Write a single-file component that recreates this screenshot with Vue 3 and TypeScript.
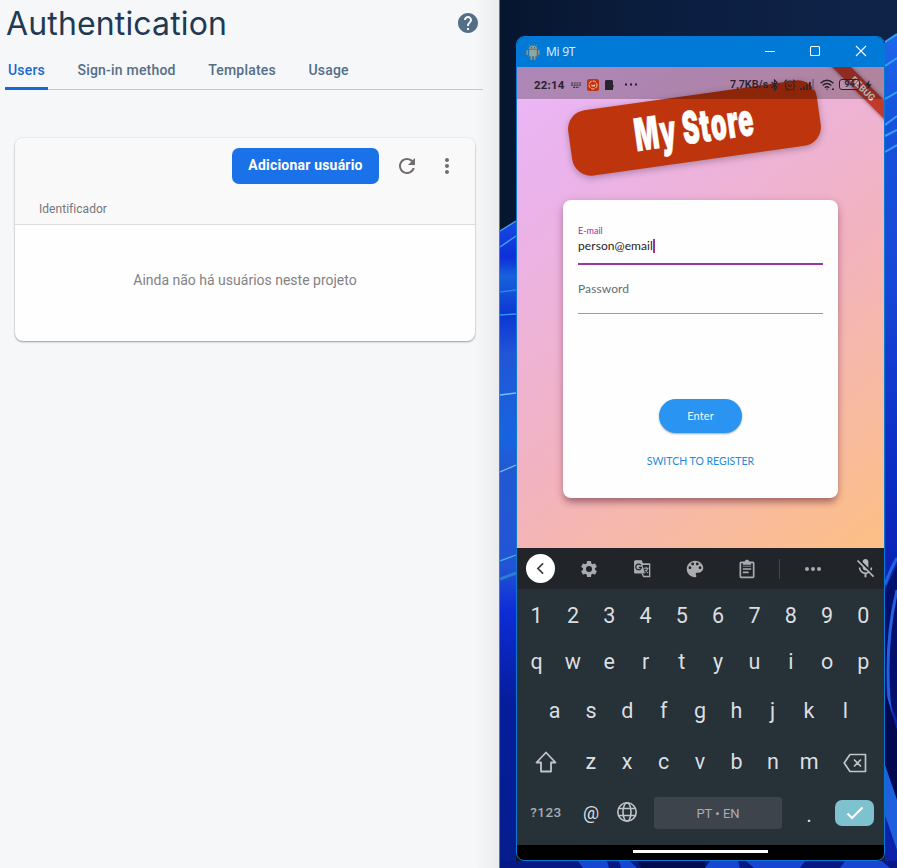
<script setup lang="ts">
interface Tab {
  label: string
  active?: boolean
}

const tabs: Tab[] = [
  { label: 'Users', active: true },
  { label: 'Sign-in method' },
  { label: 'Templates' },
  { label: 'Usage' },
]

const digits: string[] = [...'1234567890']
const topRow: string[] = [...'qwertyuiop']
const homeRow: string[] = [...'asdfghjkl']
const bottomRow: string[] = [...'zxcvbnm']
</script>

<template>
  <div class="page">
    <main class="console">
      <header class="heading">
        <h1>Authentication</h1>
        <svg class="help" viewBox="0 0 24 24"><path fill="#546e87" d="M12 2C6.48 2 2 6.48 2 12s4.48 10 10 10 10-4.48 10-10S17.52 2 12 2zm1 17h-2v-2h2v2zm2.07-7.75-.9.92C13.45 12.9 13 13.5 13 15h-2v-.5c0-1.1.45-2.1 1.17-2.83l1.24-1.26c.37-.36.59-.86.59-1.41 0-1.1-.9-2-2-2s-2 .9-2 2H8c0-2.21 1.79-4 4-4s4 1.79 4 4c0 .88-.36 1.68-.93 2.25z" /></svg>
      </header>
      <nav class="tabs">
        <a v-for="tab in tabs" :key="tab.label" :class="['tab', { active: tab.active }]">{{ tab.label }}</a>
      </nav>
      <section class="users">
        <div class="users-head">
          <div class="toolbar">
            <button class="add">Adicionar usuário</button>
            <svg class="tool refresh" viewBox="0 0 24 24"><path fill="#746b70" d="M17.65 6.35C16.2 4.9 14.21 4 12 4c-4.42 0-7.99 3.58-7.99 8s3.57 8 7.99 8c3.73 0 6.84-2.55 7.73-6h-2.08c-.82 2.33-3.04 4-5.65 4-3.31 0-6-2.69-6-6s2.69-6 6-6c1.66 0 3.14.69 4.22 1.78L13 11h7V4l-2.35 2.35z" /></svg>
            <svg class="tool" viewBox="0 0 24 24"><path fill="#746b70" d="M12 8c1.1 0 2-.9 2-2s-.9-2-2-2-2 .9-2 2 .9 2 2 2zm0 2c-1.1 0-2 .9-2 2s.9 2 2 2 2-.9 2-2-.9-2-2-2zm0 6c-1.1 0-2 .9-2 2s.9 2 2 2 2-.9 2-2-.9-2-2-2z" /></svg>
          </div>
          <div class="column-title">Identificador</div>
        </div>
        <p class="empty">Ainda não há usuários neste projeto</p>
      </section>
    </main>

    <aside class="desktop">
      <svg class="wallpaper" viewBox="0 0 397 868" preserveAspectRatio="none">
        <defs>
          <linearGradient id="night" x1="0" x2="1" y1="0" y2="0">
            <stop offset="0" stop-color="#07162f" />
            <stop offset="0.5" stop-color="#0c1f42" />
            <stop offset="1" stop-color="#0f2349" />
          </linearGradient>
          <linearGradient id="petalLeft" x1="0" x2="0" y1="225" y2="868" gradientUnits="userSpaceOnUse">
            <stop offset="0" stop-color="#1747e2" />
            <stop offset="0.05" stop-color="#0d2fd8" />
            <stop offset="0.08" stop-color="#1762db" />
            <stop offset="0.14" stop-color="#0c36d4" />
            <stop offset="0.2" stop-color="#2156d6" />
            <stop offset="0.33" stop-color="#1764e0" />
            <stop offset="0.38" stop-color="#2358d2" />
            <stop offset="0.53" stop-color="#2255d4" />
            <stop offset="0.6" stop-color="#0e2cd7" />
            <stop offset="0.74" stop-color="#061d9c" />
            <stop offset="1" stop-color="#051d8c" />
          </linearGradient>
          <linearGradient id="petalRight" x1="0" x2="0" y1="36" y2="868" gradientUnits="userSpaceOnUse">
            <stop offset="0" stop-color="#1c68ea" />
            <stop offset="0.1" stop-color="#1653dc" />
            <stop offset="0.3" stop-color="#1647d6" />
            <stop offset="0.5" stop-color="#0c2fc6" />
            <stop offset="0.62" stop-color="#0a24b8" />
            <stop offset="1" stop-color="#0b22a8" />
          </linearGradient>
        </defs>
        <rect width="397" height="868" fill="url(#night)" />
        <path d="M0 231 16 221V868H0z" fill="url(#petalLeft)" />
        <g fill="none" stroke="#46a5f2" stroke-width="1.3">
          <path d="M0 231 16 221" />
          <path d="M0 247 16 236" />
          <path d="M0 292 16 290" stroke="#2a86e8" />
          <path d="M0 315 16 314" stroke="#2f9ae8" />
          <path d="M0 395 16 393" stroke="#6fc4f2" />
          <path d="M0 472 16 465" stroke="#6fc4f2" />
          <path d="M0 561 16 555" stroke="#49b0e6" />
          <path d="M0 579 16 573" stroke="#2b7fd0" stroke-width="3" />
        </g>
        <path d="M385 42 397 34V868H385z" fill="url(#petalRight)" />
        <g fill="none" stroke="#3a9df4" stroke-width="2">
          <path d="M385 42 397 34M385 66 397 58M385 99 397 92M385 125 397 116M385 136 397 130M385 152 397 145" />
        </g>
        <path d="M385 590 397 565V720L385 690z" fill="#03106b" />
        <path d="M385 585Q390 570 397 558M397 590Q385 640 389 700L397 760" fill="none" stroke="#2360e0" stroke-width="3" />
        <path d="M385 690 397 730V800L385 765z" fill="#02094e" />
        <path d="M385 765 397 800V850L385 815z" fill="#1f60dd" />
        <path d="M0 861H397V868H0z" fill="#071984" />
        <path d="M78 861H107L109 868H83zM119 861H130L137 868H121zM210 861H238L240 868H205zM246 861H305L300 868H254zM345 861H382L390 868H340z" fill="#1746d4" />
        <path d="M137 861H205V868H141z" fill="#030c50" />
      </svg>

      <div class="window">
        <div class="titlebar">
          <svg class="droid" viewBox="0 0 14 17">
            <path d="M3 0.5 4.3 2.2M11 0.5 9.7 2.2" stroke="#7c8c89" stroke-width="1" />
            <path d="M2.7 5C2.7 2.8 4.5 1.5 7 1.5S11.3 2.8 11.3 5z" fill="#8da5a0" stroke="#5c7173" stroke-width=".5" />
            <path d="M3 5.5h8v7H9.6V16H7.8v-3.500H6.200V16H4.400v-3.500H3z" fill="#8fa7a3" stroke="#5c7173" stroke-width=".5" />
            <path d="M.4 6h1.500v5H.4zM12.100 6h1.500v5h-1.500z" fill="#8fa7a3" stroke="#5c7173" stroke-width=".4" />
            <path d="M5 3.200h1v1H5zM8 3.200h1v1H8z" fill="#384b50" />
          </svg>
          <span class="window-title">Mi 9T</span>
          <svg class="controls" viewBox="0 0 104 12" fill="none" stroke="#fff" stroke-width="1.100">
            <path d="M1 6.500h10" />
            <rect x="46.500" y="1.500" width="9" height="9" rx="1" />
            <path d="m92 1 10 10M102 1 92 11" />
          </svg>
        </div>

        <div class="app">
          <div class="banner"><span>My Store</span></div>
          <div class="ribbon">DEBUG</div>
          <div class="status">
            <span class="clock">22:14</span>
            <svg class="ic-keys" viewBox="0 0 10 6"><path d="M0 1h10M0 3.200h10M2 5.300h6" stroke="#3b3040" stroke-width="1.200" stroke-dasharray="2 .7" /></svg>
            <svg class="ic-app" viewBox="0 0 12 12">
              <rect width="12" height="12" rx="2.500" fill="#c0330f" />
              <circle cx="6" cy="6" r="4" fill="none" stroke="#f2c6b4" stroke-width="1" stroke-dasharray="3.500 1" />
              <path d="M4.500 5 6 6.500 8 5v2.500H4.500z" fill="#f2c6b4" />
            </svg>
            <svg class="ic-doc" viewBox="0 0 9 10"><path d="M1 0h6l1 1v4l1 1-1 1.500V10H0V1z" fill="#28232e" /></svg>
            <svg class="ic-more" viewBox="0 0 12 3"><path d="M0 .5h2v2H0zM5 .5h2v2H5zM10 .5h2v2h-2z" fill="#241d29" /></svg>
            <span class="rate">7,7KB/s</span>
            <svg class="ic-bt" viewBox="0 0 9 12" fill="none" stroke="#2b2230" stroke-width="1.200"><path d="m1.500 3 5.500 5.500L4.500 11V1L7 3.500 1.500 9M.2 6h1.200M7.600 6h1.200" /></svg>
            <svg class="ic-alarm" viewBox="0 0 12 12" fill="none" stroke="#3a2228" stroke-width="1.200"><circle cx="6" cy="6.500" r="4.500" /><path d="M4 5.800 6 7.500 8 5.800M.4 3 3 .8M11.600 3 9 .8M2.500 10.500 1.500 11.600M9.500 10.500l1 1.100" /></svg>
            <svg class="ic-signal" viewBox="0 0 14 11"><path d="M0 9h2v2H0zM3 7.500h2V11H3zM6 5.500h2V11H6zM9 3h1.800v8H9z" fill="#32262f" /><path d="M12.200 0H14v11h-1.800z" fill="#7c6383" /></svg>
            <svg class="ic-wifi" viewBox="0 0 15 12" fill="none" stroke="#2b2230" stroke-width="1.400"><path d="M.6 4.200Q7-1.800 13.400 4.200M2.700 6.500Q7 2.600 11.300 6.500M4.800 8.700Q7 6.800 9.200 8.700" /><path d="M6 9.800h2L7 11.200zM12 9.500h2v1.500h-2z" fill="#2b2230" stroke="none" /></svg>
            <span class="battery">94</span>
            <svg class="ic-bolt" viewBox="0 0 7 10"><path d="M4.500 0 0 5.500h2.800L2 10l4.800-5.800H4z" fill="#2b2230" /></svg>
          </div>

          <div class="login">
            <div class="field focused">
              <label>E-mail</label>
              <div class="value">person@email<i class="caret"></i></div>
            </div>
            <div class="field idle">Password</div>
            <button class="enter">Enter</button>
            <a class="switch">SWITCH TO REGISTER</a>
          </div>
        </div>

        <div class="suggest">
          <div class="back"><svg viewBox="0 0 28 28" fill="none" stroke="#3d4043" stroke-width="1.700"><path d="m16.500 9-5 5 5 5" /></svg></div>
          <svg viewBox="0 0 24 24"><path fill="#a9abae" fill-rule="evenodd" d="M19.140 12.940c.04-.3.060-.61.060-.94s-.020-.64-.070-.94l2.030-1.580c.18-.14.230-.41.120-.61l-1.920-3.320c-.12-.22-.37-.29-.59-.22l-2.390.96c-.5-.38-1.030-.7-1.620-.94L14.400 2.810c-.04-.24-.24-.41-.48-.41h-3.840c-.24 0-.43.17-.47.41L9.250 5.350c-.59.24-1.130.57-1.620.94L5.240 5.330c-.22-.08-.47 0-.59.22L2.740 8.870c-.12.21-.08.47.12.61l2.030 1.580c-.05.3-.09.63-.09.94s.02.64.07.94l-2.030 1.580c-.18.14-.23.41-.12.61l1.920 3.320c.12.22.37.29.59.22l2.390-.96c.5.38 1.030.7 1.620.94l.36 2.540c.05.24.24.41.48.41h3.840c.24 0 .44-.17.47-.41l.36-2.540c.59-.24 1.130-.56 1.620-.94l2.390.96c.22.08.47 0 .59-.22l1.920-3.320c.12-.22.070-.47-.12-.61zM12 15.600a3.600 3.600 0 1 1 0-7.200 3.600 3.600 0 0 1 0 7.200z" /></svg>
          <svg viewBox="0 0 24 24">
            <path d="M3.500 2.500h7.500l1.500 3.800H21" fill="none" stroke="#a9abae" stroke-width="2" />
            <path d="M3 2h8.200l4.300 15.500H4q-1.500 0-1.500-1.500V2.500z" fill="#a9abae" />
            <path d="M13 6.300h8.200V21H14l-2-3.500" fill="none" stroke="#a9abae" stroke-width="1.600" />
            <path d="M10.600 7.300A3.400 3.400 0 1 0 11.300 10H8.300" stroke="#212529" stroke-width="1.500" fill="none" />
            <path d="M14 11h6M17 9.300V11M19 11q-.7 3-3.500 5M15.500 13l4 4" stroke="#a9abae" stroke-width="1.300" fill="none" />
          </svg>
          <svg viewBox="0 0 24 24"><path fill="#a9abae" d="M12 3c-4.970 0-9 4.030-9 9s4.030 9 9 9c.83 0 1.500-.67 1.500-1.500 0-.39-.15-.74-.39-1.010-.23-.26-.38-.61-.38-.99 0-.83.67-1.500 1.500-1.500H16c2.760 0 5-2.240 5-5 0-4.420-4.030-8-9-8zm-5.500 9c-.83 0-1.500-.67-1.500-1.500S5.670 9 6.500 9 8 9.670 8 10.500 7.330 12 6.500 12zm3-4C8.670 8 8 7.330 8 6.500S8.670 5 9.500 5s1.500.67 1.500 1.500S10.330 8 9.500 8zm5 0c-.83 0-1.500-.67-1.500-1.500S13.670 5 14.500 5s1.500.67 1.500 1.500S15.330 8 14.500 8zm3 4c-.83 0-1.500-.67-1.500-1.500S16.670 9 17.500 9s1.500.67 1.500 1.500-.67 1.500-1.500 1.500z" transform="translate(-1.200 -1.200) scale(1.100)" /></svg>
          <svg viewBox="0 0 24 24"><path fill="#a9abae" d="M7 15h7v2H7zm0-4h10v2H7zm0-4h10v2H7zm12-4h-4.180C14.400 1.840 13.300 1 12 1s-2.400.84-2.820 2H5a2 2 0 0 0-2 2v16c0 1.100.9 2 2 2h14c1.100 0 2-.9 2-2V5c0-1.100-.9-2-2-2zm0 18H5V5h2v3h10V5h2z" /></svg>
          <span class="divider"></span>
          <svg viewBox="0 0 24 24"><path fill="#a9abae" d="M6 10a2 2 0 1 0 0 4 2 2 0 0 0 0-4zm6 0a2 2 0 1 0 0 4 2 2 0 0 0 0-4zm6 0a2 2 0 1 0 0 4 2 2 0 0 0 0-4z" transform="translate(-2.400 -2.400) scale(1.200)" /></svg>
          <svg class="mic" viewBox="0 0 24 24"><path fill="#b7b9bc" d="M19 11h-1.700c0 .74-.16 1.430-.43 2.050l1.230 1.230c.56-.98.9-2.090.9-3.280zm-4.020.17c0-.06.020-.11.020-.17V5c0-1.660-1.340-3-3-3S9 3.340 9 5v.18l5.980 5.990zM4.270 3 3 4.270l6.010 6.010V11c0 1.660 1.330 3 2.990 3 .22 0 .44-.03.65-.08l1.660 1.660c-.71.33-1.500.52-2.310.52-2.760 0-5.300-2.100-5.300-5.100H5c0 3.410 2.720 6.230 6 6.720V21h2v-3.280c.91-.13 1.770-.45 2.540-.9L19.730 21 21 19.730 4.270 3z" /></svg>
        </div>

        <div class="keyboard">
          <div class="row"><span v-for="k in digits" :key="k">{{ k }}</span></div>
          <div class="row"><span v-for="k in topRow" :key="k">{{ k }}</span></div>
          <div class="row home"><span v-for="k in homeRow" :key="k">{{ k }}</span></div>
          <div class="row third">
            <svg class="shift" viewBox="0 0 22 22" fill="none" stroke="#c2c5c8" stroke-width="1.800" stroke-linejoin="round"><path d="M11 1.500 1.500 11.500H6V20.500h10v-9h4.500z" /></svg>
            <span v-for="k in bottomRow" :key="k">{{ k }}</span>
            <svg class="erase" viewBox="0 0 24 20" fill="none" stroke="#c2c5c8" stroke-width="1.700" stroke-linejoin="round"><path d="M7 1.500h15.500v17H7L1.200 10zM11 6.500l7 7M18 6.500l-7 7" /></svg>
          </div>
          <div class="row last">
            <span class="symbols">?123</span>
            <span class="at">@</span>
            <svg class="globe" viewBox="0 0 22 22" fill="none" stroke="#c2c5c8" stroke-width="1.600"><circle cx="11" cy="11" r="9.200" /><ellipse cx="11" cy="11" rx="4" ry="9.200" /><path d="M2.500 7.500h17M2.500 14.500h17" /></svg>
            <span class="space">PT • EN</span>
            <span class="dot">.</span>
            <span class="confirm"><svg viewBox="0 0 18 14" fill="none" stroke="#fff" stroke-width="2"><path d="m1.500 7.500 4.500 4.500L16.500 1.500" /></svg></span>
          </div>
        </div>
        <div class="navbar"><i class="handle"></i></div>
      </div>
    </aside>
  </div>
</template>

<style>
body {
  margin: 0;
}
</style>

<style scoped>
.page {
  display: grid;
  grid-template-columns: 500px 397px;
  width: 897px;
  height: 868px;
  overflow: hidden;
  font-family: Roboto, "Liberation Sans", sans-serif;
}

.console {
  box-sizing: border-box;
  border-right: 1px solid #6d7375;
  padding: 0 16px 0 5px;
  background: linear-gradient(90deg, transparent 475px, rgba(120, 120, 120, .09) 499px), #f6f7f9;
}

.heading {
  display: flex;
  justify-content: space-between;
  height: 50px;
  padding: 0 3px 0 1px;
}

h1 {
  margin: 3px 0 0;
  color: #1f3a52;
  font: 400 32px/42px Inter, sans-serif;
  letter-spacing: .15px;
}

.help {
  width: 24px;
  height: 24px;
  margin-top: 11px;
}

.tabs {
  display: flex;
  gap: 26.500px;
  height: 39px;
  border-bottom: 1px solid #c3c9d1;
}

.tab {
  height: 37px;
  padding: 0 3px;
  color: #546e87;
  font-size: 14px;
  font-weight: 500;
  line-height: 40px;
  letter-spacing: .2px;
}

.tab.active {
  color: #1967d2;
  border-bottom: 3px solid #1a67d8;
  border-radius: 2px 2px 0 0;
}

.users {
  width: 460px;
  height: 203px;
  margin: 48px 0 0 10px;
  border-radius: 8px;
  overflow: hidden;
  background: #fefefe;
  box-shadow: 0 1px 2px rgba(0, 0, 0, .35), 0 0 2px rgba(0, 0, 0, .12);
}

.users-head {
  height: 86px;
  border-bottom: 1px solid #dadcdd;
  background: #f9f9f9;
}

.toolbar {
  display: flex;
  align-items: center;
  justify-content: flex-end;
  gap: 16px;
  height: 36px;
  padding: 10px 16px 0 0;
}

.add {
  width: 147px;
  height: 36px;
  padding: 0 0 2px;
  border: 0;
  border-radius: 7px;
  background: #1b72e8;
  color: #fff;
  font: 700 14px/34px Roboto, sans-serif;
  letter-spacing: .2px;
}

.tool {
  width: 24px;
  height: 24px;
}

.column-title {
  padding: 15px 0 0 24px;
  color: #77757a;
  font-size: 12px;
  line-height: 20px;
  letter-spacing: .04px;
}

.empty {
  margin: 45px 0 0;
  color: #848185;
  font-size: 14px;
  line-height: 20px;
  text-align: center;
}

.desktop {
  position: relative;
  padding: 36px 12px 7px 16px;
}

.wallpaper {
  position: absolute;
  inset: 0;
  width: 397px;
  height: 868px;
}

.window {
  position: relative;
  box-sizing: border-box;
  width: 369px;
  height: 825px;
  border: 1px solid #0878d4;
  border-radius: 8px;
  overflow: hidden;
  background: #000;
}

.titlebar {
  display: flex;
  align-items: center;
  height: 30px;
  padding-left: 9px;
  background: #007ad6;
}

.droid {
  width: 14px;
  height: 17px;
}

.window-title {
  flex: 1;
  padding-left: 6px;
  color: #e4f0ff;
  font: 12px/30px "Open Sans", sans-serif;
  letter-spacing: -.25px;
}

.controls {
  width: 104px;
  height: 12px;
  margin-right: 16px;
  margin-top: -2px;
}

.app {
  position: relative;
  height: 481px;
  overflow: hidden;
  background: linear-gradient(142.600deg, #eab7f8, #ebb2e8 22%, #f2b3be 57%, #fdc084);
}

.banner {
  position: absolute;
  left: 52px;
  top: 28px;
  width: 251px;
  height: 66px;
  border-radius: 19px;
  background: #be340c;
  box-shadow: 0 2px 7px rgba(0, 0, 0, .28);
  color: #fff;
  font: 900 42px/66px Inter, sans-serif;
  text-align: center;
  white-space: nowrap;
  transform: rotate(-8deg);
}

.banner span {
  display: inline-block;
  transform: translateY(-1px) scale(.6, 1.070);
  margin: 0 -40px;
  letter-spacing: 1.500px;
  -webkit-text-stroke: .6px #fff;
}

.ribbon {
  position: absolute;
  left: 295.500px;
  top: 15px;
  width: 100px;
  height: 13px;
  background: #c13a2c;
  box-shadow: 0 0 4px rgba(0, 0, 0, .5);
  color: #ffecf0;
  font: 700 9.500px/13px Roboto, sans-serif;
  text-align: center;
  transform: rotate(45deg);
}

.status {
  position: relative;
  display: flex;
  align-items: center;
  box-sizing: border-box;
  height: 32px;
  padding: 3px 0 0 17px;
  background: rgba(0, 0, 0, .26);
  color: #2b2230;
  font-size: 11.500px;
  font-weight: 700;
}

.clock {
  width: 37px;
  letter-spacing: .2px;
}

.ic-keys {
  width: 10px;
  height: 6px;
  margin-right: 6px;
}

.ic-app {
  width: 12px;
  height: 12px;
  margin-right: 6px;
}

.ic-doc {
  width: 9px;
  height: 10px;
  margin-right: 11px;
}

.ic-more {
  width: 12px;
  height: 3px;
}

.rate {
  width: 40px;
  margin-left: 93px;
  font-size: 10.800px;
  font-weight: 600;
}

.ic-bt {
  width: 9px;
  height: 12px;
}

.ic-alarm {
  width: 12px;
  height: 12px;
  margin-left: 5px;
}

.ic-signal {
  width: 14px;
  height: 11px;
  margin-left: 4px;
}

.ic-wifi {
  width: 15px;
  height: 12px;
  margin-left: 6px;
}

.battery {
  box-sizing: border-box;
  width: 21px;
  height: 11px;
  margin: 0 5px 0 4px;
  border: 1.500px solid #2b2230;
  border-radius: 3px;
  background: rgba(255, 225, 255, .15);
  font-size: 8.500px;
  line-height: 9px;
  text-align: center;
}

.ic-bolt {
  width: 7px;
  height: 10px;
}

.login {
  position: relative;
  display: flex;
  flex-direction: column;
  align-items: center;
  box-sizing: border-box;
  width: 275px;
  height: 298px;
  margin: 101px 0 0 46px;
  padding: 25px 15px 0;
  border-radius: 8px;
  background: #fefefe;
  box-shadow: 0 6px 7px -2px rgba(90, 30, 50, .42), 0 2px 8px rgba(90, 40, 70, .25);
  color: #25232a;
  font-family: Lato, sans-serif;
}

.field {
  box-sizing: border-box;
  width: 245px;
}

.focused {
  height: 40px;
  border-bottom: 2px solid #9b359f;
}

.focused label {
  display: block;
  height: 12px;
  color: #96329a;
  font-size: 9px;
  line-height: 12px;
}

.value {
  display: flex;
  align-items: center;
  height: 18px;
  font-size: 12px;
  line-height: 18px;
  letter-spacing: .08px;
}

.caret {
  width: 2px;
  height: 14px;
  background: #9b359f;
}

.idle {
  height: 49px;
  border-bottom: 1px solid #989c9c;
  color: #676c6e;
  font-size: 12px;
  line-height: 48px;
  letter-spacing: .1px;
}

.enter {
  flex-shrink: 0;
  width: 83px;
  height: 34px;
  margin-top: 85px;
  padding: 0;
  border: 0;
  border-radius: 17px;
  background: #2994f1;
  box-shadow: 0 1px 2px rgba(0, 0, 0, .35);
  color: #f3f8fc;
  font: 11px/34px Lato, sans-serif;
  letter-spacing: .1px;
}

.switch {
  margin-top: 18px;
  color: #258bd9;
  font-size: 10.500px;
  line-height: 20px;
}

.suggest {
  display: grid;
  grid-template-columns: 47px 49px 57px 49px 55px 11px 55px 44px;
  place-items: center;
  height: 41px;
  background: #212529;
}

.suggest > svg {
  width: 20px;
  height: 20px;
}

.suggest > .mic {
  width: 23px;
  height: 23px;
  margin-left: 6px;
}

.back {
  width: 29px;
  height: 29px;
  border-radius: 50%;
  background: #fff;
}

.divider {
  width: 1px;
  height: 20px;
  background: #41484d;
}

.keyboard {
  display: grid;
  grid-template-rows: 46px 46px 52px 50px 54px;
  box-sizing: border-box;
  height: 256px;
  padding: 3px 2px 5px;
  background: #263138;
  color: #dcdee0;
  font-size: 21.500px;
}

.row {
  display: grid;
  grid-template-columns: repeat(10, 1fr);
  place-items: center;
}

.row > span {
  margin-left: -1px;
}

.home {
  grid-template-columns: repeat(9, 1fr);
  padding: 0 18px;
}

.third {
  grid-template-columns: 54px repeat(7, 1fr) 54px;
}

.shift {
  width: 22px;
  height: 22px;
  margin-top: 2px;
}

.erase {
  width: 24px;
  height: 20px;
  margin-top: 3px;
}

.last {
  grid-template-columns: 54px 36px 36px 146px 36px 55px;
}

.last > .symbols {
  margin-top: -2px;
  margin-left: 0;
  color: #a9acb1;
  font-size: 13.500px;
  font-weight: 500;
  letter-spacing: .5px;
}

.last > .at {
  margin: -2px 0 0;
  font-size: 18px;
}

.globe {
  width: 22px;
  height: 22px;
  margin-top: -3px;
}

.last > .space {
  width: 128px;
  height: 32px;
  margin-left: 0;
  border-radius: 3px;
  background: #3e444b;
  color: #a9acb1;
  font-size: 13px;
  line-height: 33px;
  text-align: center;
}

.last > .dot {
  margin-left: 0;
  padding-top: 2px;
}

.last > .confirm {
  display: grid;
  place-items: center;
  width: 39px;
  height: 26px;
  margin-left: 0;
  border-radius: 7px;
  background: #7fc2cf;
}

.confirm svg {
  width: 18px;
  height: 14px;
}

.navbar {
  display: flex;
  justify-content: center;
  height: 15px;
}

.handle {
  width: 135px;
  height: 3px;
  margin-top: 5px;
  background: #fff;
}
</style>
